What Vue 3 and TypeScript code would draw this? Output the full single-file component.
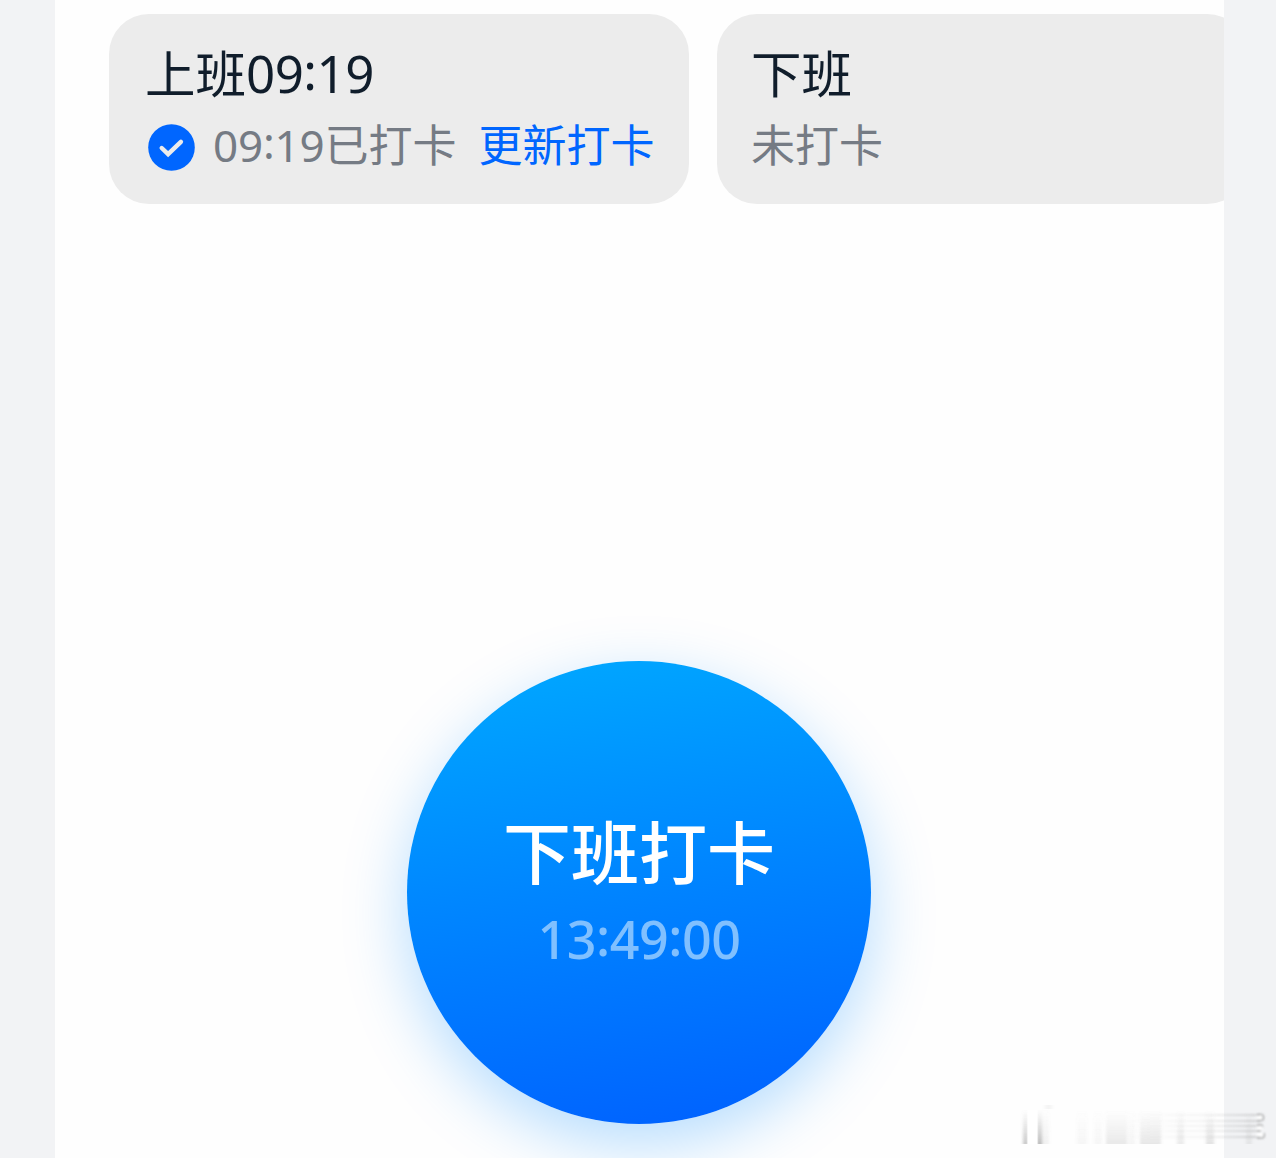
<script setup lang="ts">
const streaks = [
  { x: 57, w: 10, o: 0.06 }, { x: 74, w: 8, o: 0.06 },
  { x: 86, w: 21, o: 0.16 }, { x: 108, w: 7, o: 0.07 },
  { x: 120, w: 21, o: 0.17 }, { x: 157, w: 7, o: 0.14 },
  { x: 186, w: 8, o: 0.2 }, { x: 226, w: 6, o: 0.12 },
]
const ridges = [15, 21, 26, 31, 37]
</script>

<template>
  <main class="page">
    <section class="sheet">
      <div class="shifts">
        <article class="card">
          <h2 class="title">上班<span class="num">09<span class="colon">:</span>19</span></h2>
          <div class="status">
            <svg class="check" viewBox="0 0 47 47">
              <circle cx="23.5" cy="23.5" r="23.3" fill="#06f" />
              <path d="M13.7 24 20.1 30.2 32.9 17.8" fill="none" stroke="#ececec" stroke-width="4.4" stroke-linecap="round" stroke-linejoin="miter" />
            </svg>
            <span class="done"><span class="num">09<span class="colon">:</span>19</span>已打卡</span>
            <a class="update">更新打卡</a>
          </div>
        </article>
        <article class="card second">
          <h2 class="title">下班</h2>
          <div class="status"><span>未打卡</span></div>
        </article>
      </div>
      <button class="punch">
        <span class="action">下班打卡</span>
        <span class="clock">13<span class="colon">:</span>49<span class="colon">:</span>00</span>
      </button>
    </section>
    <svg class="mark" viewBox="0 0 256 58">
      <defs>
        <linearGradient id="fall" x1="0" y1="0" x2="0" y2="1">
          <stop offset="0" stop-color="#888" stop-opacity="0" />
          <stop offset="1" stop-color="#777" />
        </linearGradient>
        <linearGradient id="across" x1="0" y1="0" x2="1" y2="0">
          <stop offset="0" stop-color="#888" stop-opacity="0" />
          <stop offset=".6" stop-color="#888" stop-opacity=".1" />
          <stop offset="1" stop-color="#888" stop-opacity=".32" />
        </linearGradient>
        <filter id="soft" x="-10%" y="-10%" width="120%" height="120%"><feGaussianBlur stdDeviation="1.8 0.4" /></filter>
        <filter id="fine" x="-10%" y="-20%" width="120%" height="140%"><feGaussianBlur stdDeviation="0.8" /></filter>
      </defs>
      <g filter="url(#soft)">
        <rect v-for="s in streaks" :key="s.x" :x="s.x" y="10" :width="s.w" height="34" fill="url(#fall)" :opacity="s.o" />
        <rect x="3" y="10" width="5" height="34" fill="url(#fall)" opacity=".4" />
        <rect x="17" y="10" width="5" height="34" fill="url(#fall)" opacity=".5" />
        <rect x="22" y="8" width="7" height="36" fill="url(#fall)" opacity=".1" />
        <rect x="25" y="5" width="7" height="4" fill="#999" opacity=".1" />
      </g>
      <rect class="stem" x="7.5" y="10" width="10" height="34" />
      <g filter="url(#fine)">
        <rect v-for="y in ridges" :key="y" x="110" :y="y - 1" width="130" height="2" fill="url(#across)" />
        <path d="M237 14.5h4q2.5 0 2.5 3t-2.5 3h-4M237 25h4q1.5 0 1.5 2M237 31h4M244 33q1.5 5-3 5h-4" fill="none" stroke="#888" stroke-width="1.6" opacity=".65" />
        <path d="M237 17.5h5M237 28h5M237 34.5h6" stroke="#fff" stroke-width="3.4" />
      </g>
    </svg>
  </main>
</template>

<style>
body { margin: 0; }
</style>

<style scoped>
.page {
  position: relative;
  width: 1276px;
  height: 1158px;
  overflow: hidden;
  background: #f2f3f5;
  font-family: "Noto Sans CJK SC", sans-serif;
}
.sheet {
  box-sizing: border-box;
  width: 1169px;
  height: 1158px;
  margin-left: 55px;
  padding: 14px 0 0 54px;
  overflow: hidden;
  background: #fefefe;
}
.shifts { display: flex; gap: 28px; }
.card {
  box-sizing: border-box;
  flex: 0 0 580px;
  height: 190px;
  padding: 26px 30px 0 36px;
  border-radius: 40px;
  background: #ececec;
}
.card.second { flex-basis: 530px; padding-left: 34px; }
.title {
  margin: 0;
  height: 62px;
  line-height: 62px;
  color: #101d2b;
  font-size: 50.5px;
  font-weight: 400;
  white-space: nowrap;
}
.num {
  font-family: "Noto Sans", sans-serif;
  font-size: 51px;
  font-weight: 400;
  letter-spacing: -0.5px;
  line-height: 0;
}
.colon { line-height: 0; vertical-align: 0.06em; }
.status {
  display: flex;
  align-items: center;
  height: 54px;
  margin-top: 14px;
  line-height: 54px;
  color: #757b84;
  font-size: 44px;
  font-weight: 400;
  white-space: nowrap;
}
.status .num { font-size: 44px; letter-spacing: -0.2px; }
.check { width: 47px; height: 47px; margin: 9px 18px 0 3px; flex: none; }
.update { margin-left: 22px; color: #06f; }
.punch {
  display: flex;
  flex-direction: column;
  align-items: center;
  box-sizing: border-box;
  width: 464px;
  height: 463px;
  margin: 457px 0 0 298px;
  padding: 145px 0 0;
  border: 0;
  border-radius: 50%;
  background: linear-gradient(170deg, #00a8ff 2%, #0087ff 45%, #0062ff 96%);
  box-shadow: 0 20px 64px rgba(0, 137, 255, 0.29);
  color: #fff;
  font-family: inherit;
}
.action { height: 88px; line-height: 88px; font-size: 68px; font-weight: 500; }
.clock {
  height: 64px;
  margin-top: 13px;
  color: #80c0ff;
  font: 500 52px/64px "Noto Sans", sans-serif;
  letter-spacing: -0.5px;
}
.mark { position: absolute; left: 1020px; top: 1100px; width: 256px; height: 58px; }
.stem { fill: #fff; }
</style>
